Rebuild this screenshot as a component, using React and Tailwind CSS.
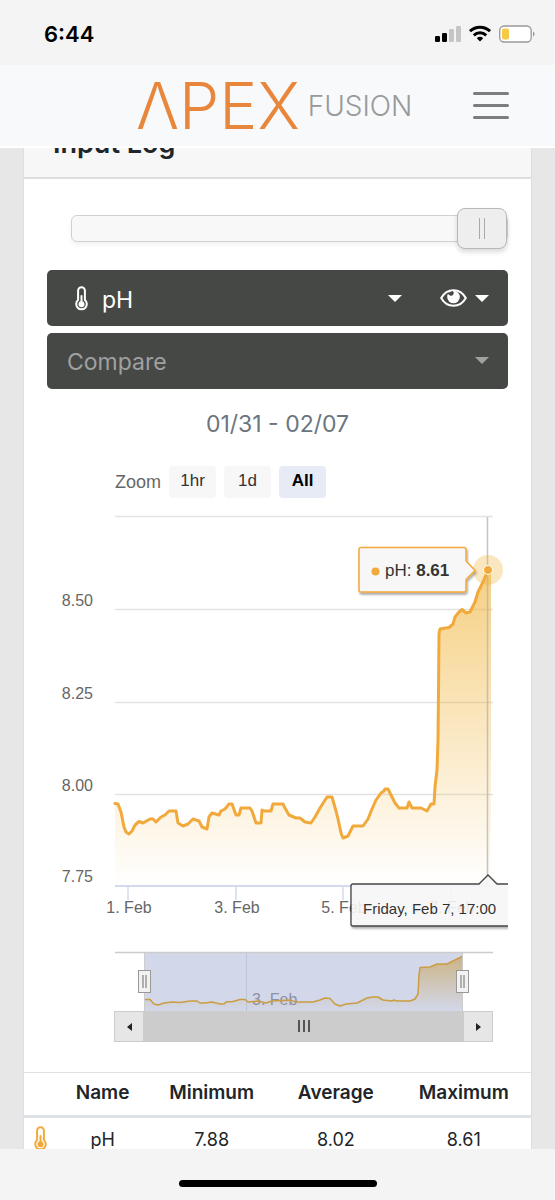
import { useState } from 'react'
import clsx from 'clsx'

const PH_LINE =
  'M115 803.5 L118 804 L121 812 L124 827 L126 832 L129 834 L132 831 L135 825 L139 821.5 L143 823 L150 819 L153 819 L156 822 L161 817 L165 815 L169 811 L176 811 L178 823 L183 826 L188 824 L193 819 L199 821 L202 827 L207 829 L209 817 L212 813 L219 815 L221 811 L225 809 L229 804 L232 804 L236 815 L239 815 L241 808 L250 808 L252 811 L256 823 L261 823 L262 810 L264 811 L271 811 L273 804 L283 804 L285 808 L289 815 L296 818 L300 818 L305 822 L311 823 L315 817 L320 808 L327 797 L332 797 L336 811 L338 819 L341 833 L343 838 L348 836 L353 826 L363 826 L368 819 L372 809 L376 800 L381 793 L384 791 L385 789 L388 789 L391 795 L395 803 L399 808 L407 808 L409 802 L412 808 L421 808 L427 811 L431 804 L434 804 L435 787 L437 770 L438 740 L438.5 690 L439 634 L440 629 L449 627.5 L453 624 L455 617 L459 612 L462 609.5 L466 613 L470 612 L475 602 L478 592 L483 582 L488 570'

const NAV_LINE =
  'M145 999.5 L150 999.5 L154 1004 L158 1005 L164 1003 L172 1002 L180 1002.5 L190 1001 L197 1001 L200 1003 L205 1003 L212 1002 L220 1004 L224 1004 L226 1002 L233 1001.5 L240 999.5 L245 999.5 L248 1002 L258 1001 L266 1003 L272 1001 L290 1000 L296 1002 L313 1002 L320 1000 L325 998 L330 998.5 L335 1004 L340 1006 L346 1004 L357 1003 L367 998 L373 997 L378 997 L383 1000 L392 1001 L394 1000 L397 1001 L410 1001 L415 999 L418 994 L419 975 L420 967.5 L430 967 L437 964 L447 964 L455 960 L462 956.5'

const GRID = [
  { y: 609.5, label: '8.50' },
  { y: 702.5, label: '8.25' },
  { y: 794.5, label: '8.00' },
]

const DAYS = [
  { x: 128, label: '1. Feb' },
  { x: 236, label: '3. Feb' },
  { x: 343, label: '5. Feb' },
  { x: 451, label: '7. Feb' },
]

const RANGES = ['1hr', '1d', 'All']

function Thermometer({ className }) {
  return (
    <svg viewBox="0 0 13 25" className={className} fill="none" aria-hidden="true">
      <path
        d="M3.1 14V4.6a3.4 3.4 0 0 1 6.800 0V14a5.300 5.300 0 1 1-6.800 0z"
        stroke="currentColor"
        strokeWidth="2"
      />
      <circle cx="6.500" cy="18.300" r="3" fill="currentColor" />
      <path d="M6.500 10v8" stroke="currentColor" strokeWidth="2" strokeLinecap="round" />
    </svg>
  )
}

function Eye() {
  return (
    <svg viewBox="0 0 27 18" className="w-[27px] h-[18px]" fill="none" aria-hidden="true">
      <path d="M1.200 9C4 4 8.400 1.200 13.500 1.200S23 4 25.800 9c-2.800 5-7.200 7.800-12.300 7.800S4 14 1.200 9z" stroke="currentColor" strokeWidth="2" />
      <circle cx="13.500" cy="8" r="6.300" fill="currentColor" />
      <path d="M7 4.500l5.500-2.500a2.300 2.300 0 1 1-2.800 4.300z" fill="#464846" />
    </svg>
  )
}

function Caret({ className }) {
  return (
    <svg viewBox="0 0 14 7" className={clsx('w-[14px] h-[7px] pointer-events-none', className)} aria-hidden="true">
      <path d="M0 0h14L7 7z" fill="currentColor" />
    </svg>
  )
}

function StatusBar() {
  return (
    <div className="h-[65px] shrink-0 flex items-center justify-between pl-11 pr-5 pt-0.5 bg-[#f4f4f4]">
      <span className="text-[22px] leading-7 font-semibold text-black">6:44</span>
      <div className="flex items-center gap-2">
        <svg viewBox="0 0 26 17" className="w-[26px] h-[17px]" aria-hidden="true">
          <rect x="0" y="11" width="5" height="6" rx="1.2" />
          <rect x="7" y="8" width="5" height="9" rx="1.2" />
          <rect x="14" y="4" width="5" height="13" rx="1.2" fill="#c5c5c5" />
          <rect x="21" y="1" width="5" height="16" rx="1.2" fill="#c5c5c5" />
        </svg>
        <svg viewBox="0 0 22 17" className="w-[22px] h-[17px]" fill="none" stroke="#000" strokeWidth="3" aria-hidden="true">
          <path d="M1 6.200a14.500 14.500 0 0 1 20 0" />
          <path d="M4.800 10.300a9 9 0 0 1 12.400 0" />
          <path d="M11 16.500l-3.200-3.300a4.500 4.500 0 0 1 6.400 0z" fill="#000" stroke="none" />
        </svg>
        <svg viewBox="0 0 36 18" className="w-9 h-[18px]" aria-hidden="true">
          <rect x="0.700" y="1" width="31.500" height="16" rx="4.500" fill="#fff" stroke="#999" strokeWidth="1.300" />
          <rect x="3" y="3.500" width="7" height="11" rx="1.800" fill="#f7ca45" />
          <path d="M34 6.500c2 .8 2 4.200 0 5z" fill="#999" />
        </svg>
      </div>
    </div>
  )
}

function Header() {
  return (
    <header className="h-[83px] shrink-0 flex items-center justify-between pl-[136px] pr-[46px] bg-[#f7f9fb] border-b-2 border-white">
      <a href="#home" className="flex items-center gap-2 whitespace-nowrap">
        <span className="text-[64px] leading-[80px] font-light text-[#e8873c]">ΛPEX</span>
        <span className="text-[28px] leading-8 font-light text-[#999]">FUSION</span>
      </a>
      <button aria-label="Menu" className="flex flex-col gap-[9px] w-[36px]">
        <span className="h-[3px] w-full rounded-sm bg-[#7d7d7d]" />
        <span className="h-[3px] w-full rounded-sm bg-[#7d7d7d]" />
        <span className="h-[3px] w-full rounded-sm bg-[#7d7d7d]" />
      </button>
    </header>
  )
}

function MainChart() {
  return (
    <svg
      viewBox="47 505 461 430"
      className="block w-full font-['Liberation_Sans',Arial,sans-serif]"
      fontSize="16"
      role="img"
      aria-label="pH history"
    >
      <defs>
        <linearGradient id="phFill" gradientUnits="userSpaceOnUse" x1="0" y1="570" x2="0" y2="886">
          <stop offset="0" stopColor="#f0b030" stopOpacity="0.6" />
          <stop offset="1" stopColor="#f0b030" stopOpacity="0" />
        </linearGradient>
        <filter id="boxShadow" x="-20%" y="-30%" width="140%" height="170%">
          <feDropShadow dx="1" dy="2" stdDeviation="1.2" floodColor="#000" floodOpacity="0.35" />
        </filter>
      </defs>

      {/* Grid */}
      <path d="M115 516.5H493" stroke="#e2e2e2" strokeWidth="1.5" />
      {GRID.map(({ y, label }) => (
        <g key={label}>
          <path d={`M115 ${y}H493`} stroke="#e2e2e2" strokeWidth="1.5" />
          <text x="93" y={y - 4} textAnchor="end" fill="#666">{label}</text>
        </g>
      ))}
      <text x="93" y="882" textAnchor="end" fill="#666">7.75</text>

      {/* Time axis */}
      <path d="M115 886H493" stroke="#d3daee" strokeWidth="2" />
      {DAYS.map(({ x, label }) => (
        <g key={label}>
          <path d={`M${x} 886v14`} stroke="#d3daee" strokeWidth="1.5" />
          <text x={x + 1} y="913" textAnchor="middle" fill="#666">{label}</text>
        </g>
      ))}

      {/* Series */}
      <path d={`${PH_LINE} H491 V886 H115 Z`} fill="url(#phFill)" />
      <path d="M487.500 517V886" stroke="#b5b5b5" strokeOpacity="0.8" strokeWidth="1.500" />
      <path d={PH_LINE} fill="none" stroke="#f2a93b" strokeWidth="3" strokeLinejoin="round" strokeLinecap="round" />
      <circle cx="488" cy="570" r="15" fill="#f0b030" fillOpacity="0.3" />
      <circle cx="488" cy="570" r="4.500" fill="#f2a93b" stroke="#fff" strokeWidth="1" />

      {/* Value tooltip */}
      <path
        d="M361 547.500H464q2 0 2 2V561l9 9.500l-9 9V590q0 2-2 2H361q-2 0-2-2V549.500q0-2 2-2z"
        fill="#f7f7f7"
        stroke="#f2a93b"
        strokeWidth="1.500"
        filter="url(#boxShadow)"
      />
      <circle cx="375.500" cy="571.500" r="4" fill="#f2a93b" />
      <text x="385" y="576" fontSize="17" fill="#333">
        pH: <tspan fontWeight="700">8.61</tspan>
      </text>

      {/* Date tooltip */}
      <path
        d="M520 884H497l-9-9l-9 9H353q-2 0-2 2V924q0 2 2 2H520z"
        fill="#f7f7f7"
        stroke="#333"
        strokeWidth="1.300"
        opacity="0.9"
        filter="url(#boxShadow)"
      />
      <text x="363" y="914" fontSize="15" fill="#333">Friday, Feb 7, 17:00</text>
    </svg>
  )
}

function NavHandle({ x }) {
  return (
    <g transform={`translate(${x} 970)`}>
      <rect x="0.500" y="0.500" width="12" height="22" fill="#f2f2f2" stroke="#999" />
      <path d="M5 5v13M8 5v13" stroke="#999" strokeWidth="1.500" />
    </g>
  )
}

function Navigator() {
  return (
    <div>
      <svg viewBox="47 951 461 60" className="block w-full" role="img" aria-label="Range overview">
        <defs>
          <linearGradient id="navFill" gradientUnits="userSpaceOnUse" x1="0" y1="956" x2="0" y2="1011">
            <stop offset="0" stopColor="#c8a050" stopOpacity="0.65" />
            <stop offset="1" stopColor="#c8a050" stopOpacity="0" />
          </linearGradient>
        </defs>
        <rect x="144" y="953" width="319" height="58" fill="#d2d8ea" />
        <path d="M246.500 953V1011" stroke="#bcc6d8" />
        <text x="252" y="1005" fontSize="16" fill="#8c91a6" className="font-['Liberation_Sans',Arial,sans-serif]">3. Feb</text>
        <path d={`${NAV_LINE} V1011 H145 Z`} fill="url(#navFill)" />
        <path d={NAV_LINE} fill="none" stroke="#cb9c42" strokeWidth="1.500" strokeLinejoin="round" />
        <path d="M115 952.500H493" stroke="#ccc" strokeWidth="1.500" />
        <path d="M144.500 953V1011M462.500 953V1011" stroke="#ccc" />
        <NavHandle x={138} />
        <NavHandle x={456} />
      </svg>
      <div className="flex h-[31px] ml-[67px] mr-[15px] bg-[#ccc]">
        <button aria-label="Scroll left" className="w-[30px] flex items-center justify-center bg-[#e6e6e6] border border-[#ccc]">
          <svg viewBox="0 0 5 8" className="w-[5px] h-2"><path d="M5 0v8L0 4z" fill="#222" /></svg>
        </button>
        <div className="flex-1 flex items-center justify-center gap-[3px] pb-0.5">
          <span className="w-0.5 h-3 bg-[#555]" />
          <span className="w-0.5 h-3 bg-[#555]" />
          <span className="w-0.5 h-3 bg-[#555]" />
        </div>
        <button aria-label="Scroll right" className="w-[30px] flex items-center justify-center bg-[#e6e6e6] border border-[#ccc]">
          <svg viewBox="0 0 5 8" className="w-[5px] h-2"><path d="M0 0v8l5-4z" fill="#222" /></svg>
        </button>
      </div>
    </div>
  )
}

function StatsTable() {
  return (
    <table className="w-full table-fixed border-t border-[#dee2e6] text-center text-[18px] leading-6 text-[#212529]">
      <colgroup>
        <col className="w-[33px]" />
        <col className="w-[18%]" />
        <col className="w-[25%]" />
        <col className="w-[24%]" />
        <col />
      </colgroup>
      <thead className="text-[19px]">
        <tr className="border-b-3 border-[#dee2e6]">
          <td />
          <th className="pt-2 pb-[10px] font-semibold">Name</th>
          <th className="pt-2 pb-[10px] font-semibold">Minimum</th>
          <th className="pt-2 pb-[10px] font-semibold">Average</th>
          <th className="pt-2 pb-[10px] font-semibold">Maximum</th>
        </tr>
      </thead>
      <tbody>
        <tr>
          <td className="align-top pt-2"><Thermometer className="w-[13px] h-[25px] mx-auto text-[#f2a93b]" /></td>
          <td className="py-[10px]">pH</td>
          <td className="py-[10px]">7.88</td>
          <td className="py-[10px]">8.02</td>
          <td className="py-[10px]">8.61</td>
        </tr>
      </tbody>
    </table>
  )
}

export default function App() {
  const [range, setRange] = useState('All')

  return (
    <div className="h-screen flex flex-col overflow-hidden bg-[#e7e7e7] font-[Inter,sans-serif]">
      <StatusBar />
      <Header />

      <main className="flex-1 min-h-0 overflow-hidden px-[23px]">
        <div className="-mt-9 bg-white border-x border-[#dedede]">
          <h1 className="h-[67px] px-[29px] pt-4 text-[27px] leading-8 font-semibold text-[#212529] bg-[#f7f7f7] border-b-2 border-[#dedede]">
            Input Log
          </h1>

          <div className="px-[23px] pt-7">
            <input
              type="range"
              aria-label="History position"
              defaultValue="100"
              className="block ml-6 w-[calc(100%-24px)] h-[42px] appearance-none bg-transparent [&::-webkit-slider-runnable-track]:h-[27px] [&::-webkit-slider-runnable-track]:rounded-md [&::-webkit-slider-runnable-track]:border [&::-webkit-slider-runnable-track]:border-[#d0d0d0] [&::-webkit-slider-runnable-track]:bg-[#f8f8f8] [&::-webkit-slider-runnable-track]:shadow-[0_3px_4px_#0000000d] [&::-webkit-slider-thumb]:appearance-none [&::-webkit-slider-thumb]:-mt-2 [&::-webkit-slider-thumb]:h-[41px] [&::-webkit-slider-thumb]:w-[50px] [&::-webkit-slider-thumb]:rounded-lg [&::-webkit-slider-thumb]:border [&::-webkit-slider-thumb]:border-[#b8b8b8] [&::-webkit-slider-thumb]:bg-[#eee] [&::-webkit-slider-thumb]:bg-[linear-gradient(90deg,#aaa_1px,transparent_1px,transparent_5px,#aaa_5px)] [&::-webkit-slider-thumb]:bg-[length:6px_21px] [&::-webkit-slider-thumb]:bg-center [&::-webkit-slider-thumb]:bg-no-repeat [&::-webkit-slider-thumb]:shadow-[0_3px_5px_#00000026]"
            />

            <div className="mt-[21px] h-14 flex items-center rounded-[5px] bg-[#464846] text-white">
              <label htmlFor="probe" aria-label="Probe" className="pl-7">
                <Thermometer className="w-[13px] h-[25px]" />
              </label>
              <select id="probe" className="flex-1 h-full pl-[14px] pt-1 appearance-none bg-transparent text-[23px]">
                <option>pH</option>
              </select>
              <Caret />
              <button aria-label="Visibility" className="flex items-center gap-2 pl-[38px] pr-[19px]">
                <Eye />
                <Caret />
              </button>
            </div>

            <div className="relative mt-[7px] h-14 rounded-[5px] bg-[#464846] text-[#a0a0a0]">
              <select aria-label="Compare" className="w-full h-full px-5 pt-0.5 appearance-none bg-transparent text-[23px]">
                <option>Compare</option>
              </select>
              <Caret className="absolute right-[19px] top-6" />
            </div>

            <p className="mt-5 text-center text-[23px] leading-[30px] text-[#6c757d]">01/31 - 02/07</p>

            <div className="mt-[27px] flex items-center gap-2 pl-[68px] font-['Liberation_Sans',Arial,sans-serif] text-[17px]">
              <span className="text-[18px] text-[#666]">Zoom</span>
              {RANGES.map((label) => (
                <button
                  key={label}
                  onClick={() => setRange(label)}
                  className={clsx(
                    'w-[47px] h-8 pb-0.5 rounded-sm',
                    range === label ? 'bg-[#e6ebf5] font-bold text-black' : 'bg-[#f7f7f7] text-[#333]'
                  )}
                >
                  {label}
                </button>
              ))}
            </div>

            <div className="mt-[7px]">
              <MainChart />
            </div>
            <div className="mt-4">
              <Navigator />
            </div>
          </div>

          <div className="mt-[30px]">
            <StatsTable />
          </div>
        </div>
      </main>

      <footer className="h-[51px] shrink-0 flex justify-center pt-[31px] bg-[#f4f4f4]">
        <div className="w-[198px] h-[7px] rounded-full bg-black" />
      </footer>
    </div>
  )
}
